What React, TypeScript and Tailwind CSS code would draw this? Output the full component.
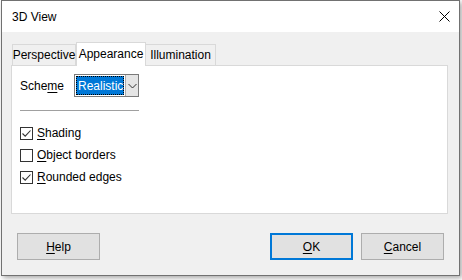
import type { ReactNode } from 'react';

const Mn = ({ children }: { children: ReactNode }) => <span className="underline underline-offset-2">{children}</span>;

const Check = ({ checked, children }: { checked?: boolean; children: ReactNode }) => (
    <div className="flex items-center h-[22px]">
        <div className="w-[13px] h-[13px] border border-[#333] bg-white flex items-center justify-center">
            {checked && (
                <svg width="11" height="11" viewBox="0 0 11 11">
                    <path d="M1.5 5.5 L4.2 8.2 L9.5 2.5" fill="none" stroke="#333" strokeWidth="1.1" />
                </svg>
            )}
        </div>
        <span className="ml-[4px]">{children}</span>
    </div>
);

const Button = ({ children, focused, className }: { children: ReactNode; focused?: boolean; className?: string }) => (
    <div
        className={
            'w-[83px] h-[27px] flex items-center justify-center bg-[#e1e1e1] ' +
            (focused ? 'border-2 border-[#0078d7] ' : 'border border-[#adadad] ') +
            (className ?? '')
        }
    >
        {children}
    </div>
);

export default function App() {
    return (
        <div
            className="w-[462px] h-[280px] bg-white text-[12px] text-black overflow-hidden"
            style={{ fontFamily: '"Liberation Sans", Arial, sans-serif' }}
        >
            <div className="ml-[1px] w-[459px] h-[276px] border border-[#717171] flex flex-col shadow-[2px_2px_5px_rgba(0,0,0,0.35)]">
                {/* title bar */}
                <div className="h-[31px] bg-white flex items-center justify-between pl-[10px] pr-[9px]">
                    <span>3D View</span>
                    <svg width="11" height="11" viewBox="0 0 11 11">
                        <path d="M0.5 0.5 L10.5 10.5 M10.5 0.5 L0.5 10.5" stroke="#000" strokeWidth="1" />
                    </svg>
                </div>

                {/* body */}
                <div className="flex-1 bg-[#f0f0f0] flex flex-col pl-[9px] pt-[9px]">
                    {/* tabs */}
                    <div className="flex items-end h-[24px] pl-[1px] relative z-10">
                        <div className="h-[21px] w-[64px] border border-b-0 border-[#d9d9d9] flex items-center justify-center bg-[#f0f0f0]">
                            Perspective
                        </div>
                        <div className="h-[24px] w-[70px] border border-b-0 border-[#d9d9d9] bg-white flex items-center justify-center -mb-px pb-[1px]">
                            Appearance
                        </div>
                        <div className="h-[21px] w-[70px] border border-b-0 border-l-0 border-[#d9d9d9] flex items-center justify-center bg-[#f0f0f0]">
                            Illumination
                        </div>
                    </div>

                    {/* panel */}
                    <div className="w-[437px] h-[149px] bg-white border border-[#d9d9d9] pl-[8px] pt-[8px]">
                        <div className="flex items-center">
                            <span className="w-[54px]">
                                Sche<Mn>m</Mn>e
                            </span>
                            <div className="flex h-[23px] w-[65px] border border-[#7a7a7a]">
                                <div className="flex-1 p-[1px] bg-white">
                                    <div className="h-full bg-[#0078d7] text-white flex items-center pl-[1px] border border-dotted border-black">
                                        Realistic
                                    </div>
                                </div>
                                <div className="w-[17px] bg-[#e5e5e5] border-l border-[#adadad] flex items-center justify-center">
                                    <svg width="9" height="6" viewBox="0 0 9 6">
                                        <path d="M0.5 1 L4.5 5 L8.5 1" fill="none" stroke="#333" strokeWidth="1" />
                                    </svg>
                                </div>
                            </div>
                        </div>
                        <div className="w-[119px] h-px bg-[#a0a0a0] mt-[13px] mb-[11px]" />
                        <Check checked>
                            <Mn>S</Mn>hading
                        </Check>
                        <Check>
                            <Mn>O</Mn>bject borders
                        </Check>
                        <Check checked>
                            <Mn>R</Mn>ounded edges
                        </Check>
                    </div>

                    {/* buttons */}
                    <div className="flex mt-[19px] pl-[6px] pr-[15px]">
                        <Button>
                            <Mn>H</Mn>elp
                        </Button>
                        <div className="flex-1" />
                        <Button focused>
                            <Mn>O</Mn>K
                        </Button>
                        <Button className="ml-[8px]">
                            <Mn>C</Mn>ancel
                        </Button>
                    </div>
                </div>
            </div>
        </div>
    );
}
